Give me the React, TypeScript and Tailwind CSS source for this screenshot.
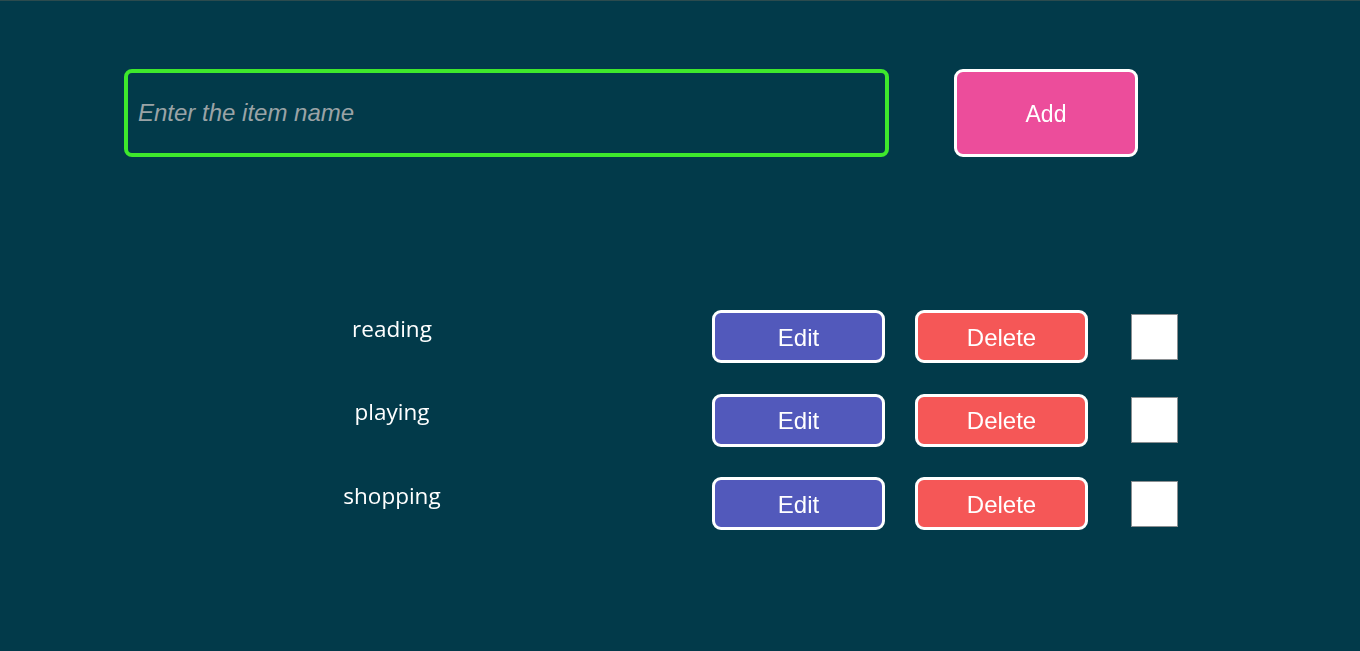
import { useState } from 'react';

const initialItems = ['reading', 'playing', 'shopping'];

export default function App() {
  const [items] = useState(initialItems);
  const [name, setName] = useState('');

  return (
    <div className="min-h-[651px] w-full bg-[#023a4a] border-t border-[#2c4b4e] font-['Liberation_Sans',Arial,sans-serif]">
      {/* Input row */}
      <div className="flex items-center pt-[68px] pl-[124px]">
        <input
          autoFocus
          value={name}
          onChange={(e) => setName(e.target.value)}
          placeholder="Enter the item name"
          className="w-[765px] h-[88px] rounded-[8px] border-[4px] border-[#3ee82c] bg-transparent pl-[10px] text-[24px] text-white placeholder:italic placeholder:text-[#9aa3a6] outline-none caret-white"
        />
        <button className="ml-[65px] w-[184px] h-[88px] rounded-[9px] border-[3px] border-white bg-[#ec4d9b] pt-[2px] text-[23px] text-white">
          Add
        </button>
      </div>

      {/* List */}
      <ul className="mt-[153px] flex flex-col gap-[30.5px]">
        {items.map((item) => (
          <li key={item} className="flex items-center">
            <div className="w-[240px] ml-[272px] pb-[16px] text-center text-[22.5px] text-white font-['Open_Sans','Noto_Sans',sans-serif]">
              {item}
            </div>
            <button className="ml-[200px] w-[173px] h-[53px] rounded-[9px] border-[3px] border-white bg-[#5259bb] pt-[2px] text-[24px] text-white">
              Edit
            </button>
            <button className="ml-[30px] w-[173px] h-[53px] rounded-[9px] border-[3px] border-white bg-[#f55757] pt-[2px] text-[24px] text-white">
              Delete
            </button>
            <input
              type="checkbox"
              className="ml-[43px] w-[47px] h-[46px] appearance-none bg-white border border-[#8a8f92]"
            />
          </li>
        ))}
      </ul>
    </div>
  );
}
